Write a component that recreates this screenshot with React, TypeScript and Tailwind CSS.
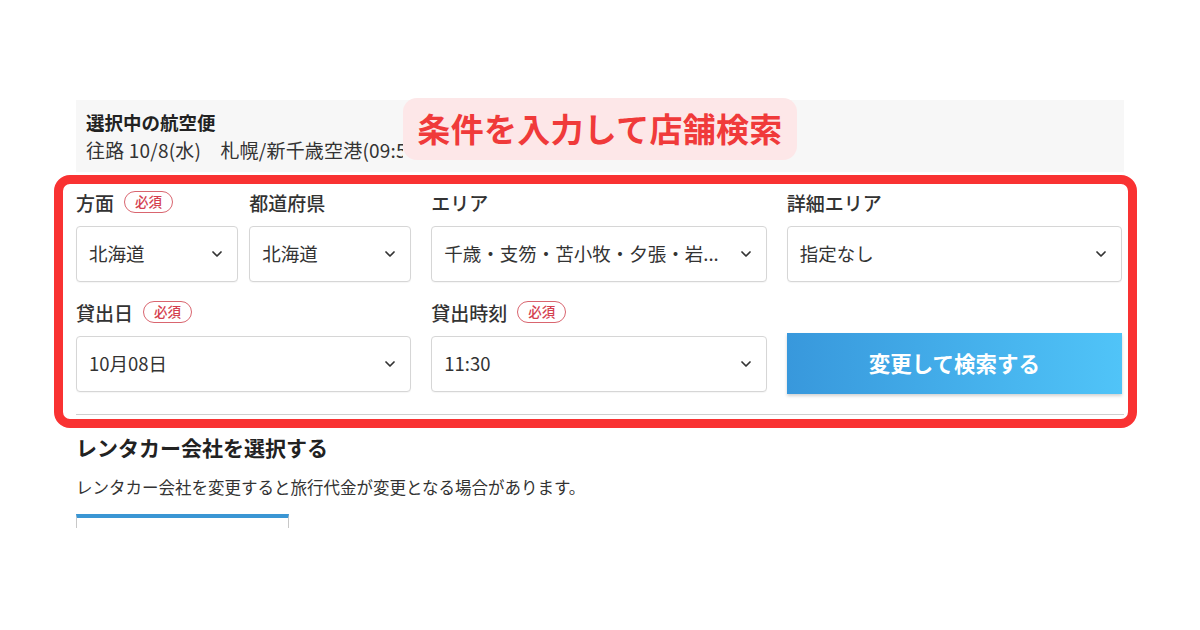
import { ChevronDown } from "lucide-react";

const font = { fontFamily: '"Noto Sans CJK JP", "Noto Sans", sans-serif' };

const Required = () => (
  <span className="ml-[10px] inline-flex h-[22px] items-center rounded-full border border-[#d9656f] px-[10px] text-[13.5px] leading-none text-[#d4404f]">
    必須
  </span>
);

const Label = ({ text, required }: { text: string; required?: boolean }) => (
  <div className="mb-[12px] flex h-[24px] items-center text-[19px] font-medium leading-none text-[#333]">
    {text}
    {required && <Required />}
  </div>
);

const Select = ({ value }: { value: string }) => (
  <div className="flex h-[56px] items-center justify-between rounded-[4px] border border-[#d6d6d6] bg-white pl-[12px] pr-[12px] shadow-[0_1px_1px_rgba(0,0,0,0.04)]">
    <span className="whitespace-nowrap text-[18.5px] text-[#333]">{value}</span>
    <ChevronDown size={16} strokeWidth={2.6} className="ml-2 shrink-0 text-[#333]" />
  </div>
);

export default function App() {
  return (
    <div className="relative h-[630px] w-[1200px] overflow-hidden bg-white" style={font}>
      <div className="ml-[76px] w-[1048px] pt-[100px]">
        {/* selected flight */}
        <div className="h-[72px] bg-[#f7f7f7] px-[10px] pt-[9px]">
          <div className="text-[18.5px] font-bold leading-[26px] text-[#222]">選択中の航空便</div>
          <div className="mt-[2px] w-[317px] overflow-hidden whitespace-nowrap text-[19px] tracking-[0.2px] leading-[26px] text-[#333]">
            往路 10/8(水)　札幌/新千歳空港(09:55)
          </div>
        </div>

        {/* search form */}
        <div className="border-b border-[#cfcfcf] pb-[22px] pt-[18px]">
          <div className="grid grid-cols-3 gap-x-[20px] gap-y-[18px] pr-[2px]">
            <div className="grid grid-cols-2 gap-x-[11px]">
              <div>
                <Label text="方面" required />
                <Select value="北海道" />
              </div>
              <div>
                <Label text="都道府県" />
                <Select value="北海道" />
              </div>
            </div>
            <div>
              <Label text="エリア" />
              <Select value="千歳・支笏・苫小牧・夕張・岩..." />
            </div>
            <div>
              <Label text="詳細エリア" />
              <Select value="指定なし" />
            </div>

            <div>
              <Label text="貸出日" required />
              <Select value="10月08日" />
            </div>
            <div>
              <Label text="貸出時刻" required />
              <Select value="11:30" />
            </div>
            <div className="flex items-end">
              <button className="mb-[-2px] flex h-[61px] w-full items-center justify-center bg-gradient-to-r from-[#3898dc] to-[#50c4f8] text-[21.5px] font-bold text-white shadow-[0_2px_3px_rgba(0,0,0,0.18)]">
                変更して検索する
              </button>
            </div>
          </div>
        </div>

        {/* rental company */}
        <h2 className="mt-[17px] text-[21px] font-bold leading-[30px] text-[#222]">レンタカー会社を選択する</h2>
        <p className="mt-[13px] text-[16.5px] leading-[24px] text-[#333]">
          レンタカー会社を変更すると旅行代金が変更となる場合があります。
        </p>
        <div className="mt-[15px] h-[14px] w-[213px] border-x border-t-4 border-x-[#c8c8c8] border-t-[#3a96d4]" />
      </div>

      {/* annotation frame */}
      <div className="pointer-events-none absolute left-[54px] top-[175px] h-[253px] w-[1083px] rounded-[16px] border-[9px] border-[#f93232]" />
      <div className="absolute left-[403px] top-[98px] flex h-[62px] w-[394px] items-center justify-center rounded-[14px] bg-[#fde7e8] text-[33px] font-bold tracking-[0.3px] text-[#f03a3a]">
        条件を入力して店舗検索
      </div>
    </div>
  );
}
